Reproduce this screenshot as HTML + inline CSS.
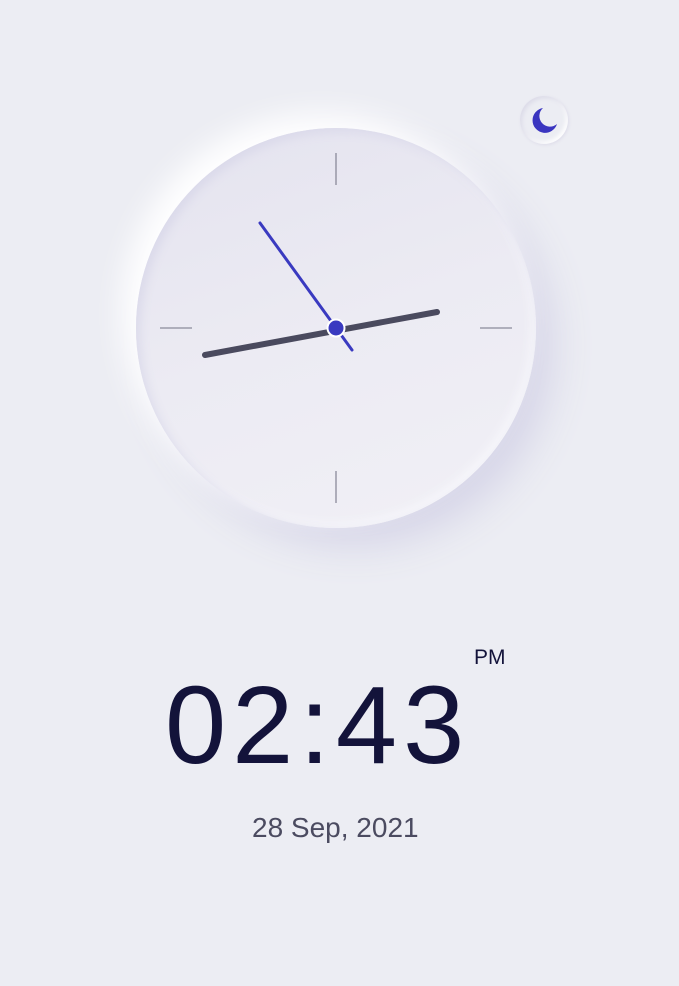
<!DOCTYPE html>
<html><head><style>
html,body{margin:0;padding:0;}
body{width:679px;height:986px;background:#ecedf3;position:relative;overflow:hidden;font-family:"Liberation Sans",sans-serif;}
.clock{position:absolute;left:136px;top:128px;width:400px;height:400px;border-radius:50%;
background:linear-gradient(160deg,#e4e3ef 0%,#ecebf3 50%,#f1f0f6 100%);
box-shadow:-14px -14px 30px #ffffff, 18px 18px 40px #d6d5e8, inset 4px 4px 10px #dad9ea, inset -4px -4px 10px #f7f7fb;}
.btn{position:absolute;left:520px;top:96px;width:48px;height:48px;border-radius:50%;background:#ecedf3;
box-shadow:inset 2px 2px 4px #dcdbe8, inset -2px -2px 4px #fff, 1px 1px 3px #dddce9;}
.t{position:absolute;color:#13133a;}
</style></head><body>
<div class="clock"></div>
<svg width="679" height="986" style="position:absolute;left:0;top:0">
<g stroke="#8a8a9a" stroke-width="1.3">
<line x1="336" y1="153" x2="336" y2="185"/><line x1="336" y1="471" x2="336" y2="503"/>
<line x1="160" y1="328" x2="192" y2="328"/><line x1="480" y1="328" x2="512" y2="328"/>
</g>
<line x1="205" y1="355" x2="437" y2="312" stroke="#4a4a5e" stroke-width="6" stroke-linecap="round"/>
<line x1="260" y1="223" x2="352" y2="350" stroke="#3a3ac0" stroke-width="3" stroke-linecap="round"/>
<circle cx="336" cy="328" r="8.5" fill="#3a3ac0" stroke="#fff" stroke-width="2"/>
</svg>
<div class="btn"></div>
<svg width="30" height="30" style="position:absolute;left:529px;top:105px" viewBox="0 0 30 30">
<path d="M14 3 A12.5 12.5 0 1 0 28 19 A9 9 0 0 1 14 3 Z" fill="#3a35c0"/>
</svg>
<div class="t" style="left:165px;top:661px;font-size:110px;line-height:130px;letter-spacing:6px;">02:43</div>
<div class="t" style="left:474px;top:645px;font-size:21px;line-height:26px;">PM</div>
<div class="t" style="left:252px;top:811px;font-size:28px;line-height:34px;color:#4b4b60;">28 Sep, 2021</div>
</body></html>
